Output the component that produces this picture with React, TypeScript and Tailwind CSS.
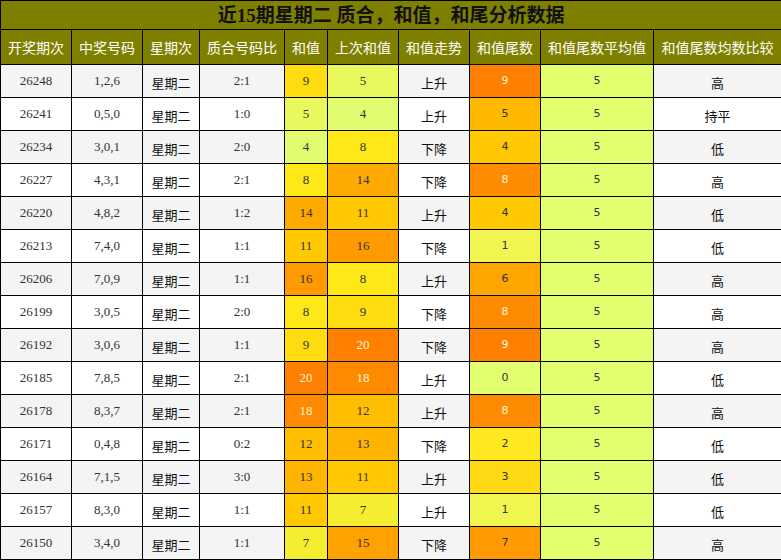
const rows: [string, string, string, number, number, string, number, number, string][] = [
  ["26248", "1,2,6", "2:1", 9, 5, "上升", 9, 5, "高"],
  ["26241", "0,5,0", "1:0", 5, 4, "上升", 5, 5, "持平"],
  ["26234", "3,0,1", "2:0", 4, 8, "下降", 4, 5, "低"],
  ["26227", "4,3,1", "2:1", 8, 14, "下降", 8, 5, "高"],
  ["26220", "4,8,2", "1:2", 14, 11, "上升", 4, 5, "低"],
  ["26213", "7,4,0", "1:1", 11, 16, "下降", 1, 5, "低"],
  ["26206", "7,0,9", "1:1", 16, 8, "上升", 6, 5, "高"],
  ["26199", "3,0,5", "2:0", 8, 9, "下降", 8, 5, "高"],
  ["26192", "3,0,6", "1:1", 9, 20, "下降", 9, 5, "高"],
  ["26185", "7,8,5", "2:1", 20, 18, "上升", 0, 5, "低"],
  ["26178", "8,3,7", "2:1", 18, 12, "上升", 8, 5, "高"],
  ["26171", "0,4,8", "0:2", 12, 13, "下降", 2, 5, "低"],
  ["26164", "7,1,5", "3:0", 13, 11, "上升", 3, 5, "低"],
  ["26157", "8,3,0", "1:1", 11, 7, "上升", 1, 5, "低"],
  ["26150", "3,4,0", "1:1", 7, 15, "下降", 7, 5, "高"],
];

// heat colours read off the reference
const sumColors: Record<number, string> = {
  4: "#e2fc70",
  5: "#e9f85c",
  7: "#f5ee30",
  8: "#ffe818",
  9: "#ffdc10",
  11: "#ffc800",
  12: "#ffbe00",
  13: "#ffb400",
  14: "#ffaa00",
  15: "#ffa200",
  16: "#ff9a00",
  18: "#ff8a00",
  20: "#ff7f00",
};

const tailColors: Record<number, string> = {
  0: "#e2ff70",
  1: "#f0f550",
  2: "#ffe820",
  3: "#ffd914",
  4: "#ffc800",
  5: "#ffb800",
  6: "#ffa500",
  7: "#ff9a00",
  8: "#ff8c00",
  9: "#ff8000",
};

const headers = [
  "开奖期次",
  "中奖号码",
  "星期次",
  "质合号码比",
  "和值",
  "上次和值",
  "和值走势",
  "和值尾数",
  "和值尾数平均值",
  "和值尾数均数比较",
];

const widths = [71, 71, 57, 85, 43, 71, 71, 71, 113, 128];

const serif = "font-['Liberation_Serif','Noto_Sans_CJK_SC',serif]";
const cjk = "font-['Noto_Sans_CJK_SC',sans-serif]";
const sans = "font-['DejaVu_Sans','Noto_Sans_CJK_SC',sans-serif]";

function HeatCell({ value, color, light, font }: { value: number; color: string; light: boolean; font: string }) {
  return (
    <td
      className={`border border-black text-center ${font} ${light ? "text-[#fff4d8]" : "text-[#333]"}`}
      style={{ backgroundColor: color }}
    >
      {value}
    </td>
  );
}

export default function App() {
  return (
    <div className="w-[781px] bg-white">
      <table className="w-[781px] table-fixed border-collapse">
        <colgroup>
          {widths.map((w, i) => (
            <col key={i} style={{ width: w }} />
          ))}
        </colgroup>
        <thead>
          <tr className="h-[29px]">
            <th
              colSpan={10}
              className={`border border-black bg-[#808000] text-center text-[19px] font-bold leading-none text-[#111] ${serif}`}
            >
              近15期星期二 质合，和值，和尾分析数据
            </th>
          </tr>
          <tr className="h-[35px]">
            {headers.map((h) => (
              <th
                key={h}
                className={`border border-black bg-[#808000] text-center text-[14px] font-normal text-white ${cjk}`}
              >
                {h}
              </th>
            ))}
          </tr>
        </thead>
        <tbody>
          {rows.map((r, i) => (
            <tr key={r[0]} className={`h-[33px] ${i % 2 === 0 ? "bg-[#f4f4f4]" : "bg-white"}`}>
              <td className={`border border-black text-center text-[13px] text-[#333] ${serif}`}>{r[0]}</td>
              <td className={`border border-black text-center text-[13px] text-[#333] ${serif}`}>{r[1]}</td>
              <td className={`border border-black pt-1 text-center text-[13px] text-[#111] ${cjk}`}>星期二</td>
              <td className={`border border-black text-center text-[13px] text-[#333] ${serif}`}>{r[2]}</td>
              <HeatCell value={r[3]} color={sumColors[r[3]]} light={r[3] >= 18} font={`text-[13px] ${serif}`} />
              <HeatCell value={r[4]} color={sumColors[r[4]]} light={r[4] >= 18} font={`text-[13px] ${serif}`} />
              <td className={`border border-black pt-1 text-center text-[13px] text-[#111] ${cjk}`}>{r[5]}</td>
              <HeatCell value={r[6]} color={tailColors[r[6]]} light={r[6] >= 8} font={`text-[11px] ${sans}`} />
              <td className={`border border-black bg-[#e2ff70] text-center text-[11px] text-[#333] ${sans}`}>{r[7]}</td>
              <td className={`border border-black pt-1 text-center text-[13px] text-[#111] ${cjk}`}>{r[8]}</td>
            </tr>
          ))}
        </tbody>
      </table>
    </div>
  );
}
